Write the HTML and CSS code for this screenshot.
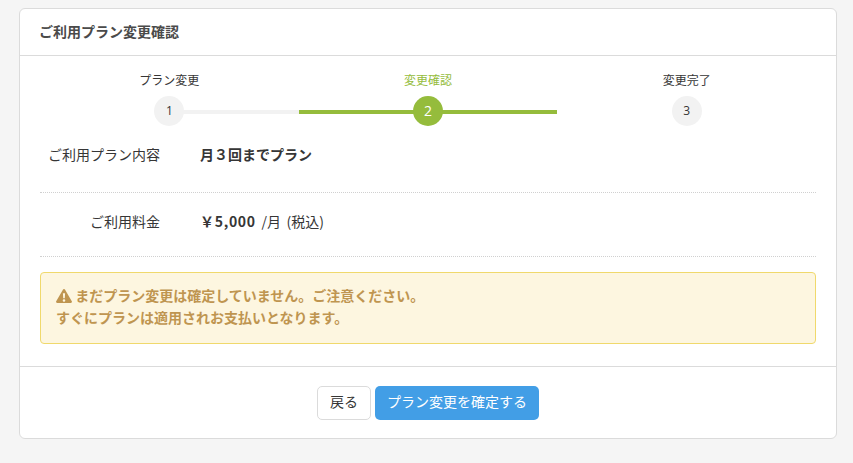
FILE: index.html
```html
<!DOCTYPE html>
<html lang="ja">
  <head>
    <meta charset="utf-8">
    <title>ご利用プラン変更確認</title>
    <link rel="stylesheet" href="styles.css">
  </head>
  <body>
    <div class="card">
      <div class="card_header">ご利用プラン変更確認</div>

      <div class="card_content">
        <div class="steps">
          <div class="step">
            <div class="step_label">プラン変更</div>
            <div class="step_circle">1</div>
          </div>
          <div class="step step_active">
            <div class="step_label">変更確認</div>
            <div class="step_circle">2</div>
          </div>
          <div class="step step_last">
            <div class="step_label">変更完了</div>
            <div class="step_circle">3</div>
          </div>
        </div>

        <div class="plan_row plan_row_first">
          <div class="plan_label">ご利用プラン内容</div>
          <div class="plan_value"><strong>月３回までプラン</strong></div>
        </div>
        <div class="plan_row plan_row_second">
          <div class="plan_label">ご利用料金</div>
          <div class="plan_value plan_price"><strong>￥5,000</strong> /月 (税込)</div>
        </div>

        <div class="notice">
          <svg class="notice_icon" viewBox="0 0 16 14" width="16" height="14">
            <path fill="#bf9550" fill-rule="evenodd" d="M8 0c.5 0 .9.3 1.1.7l6.7 11.500c.5.8-.1 1.800-1.100 1.800H1.300C.3 14-.3 13 .2 12.200L6.900.7C7.100.3 7.500 0 8 0zM6.900 4.300l.3 5h1.600l.3-5zM8 10.200a1.300 1.300 0 1 0 0 2.600 1.300 1.300 0 0 0 0-2.600z"/>
          </svg>
          まだプラン変更は確定していません。ご注意ください。<br>
          すぐにプランは適用されお支払いとなります。
        </div>
      </div>

      <div class="card_footer">
        <button class="button">戻る</button>
        <button class="button button_primary">プラン変更を確定する</button>
      </div>
    </div>
  </body>
</html>
```

FILE: styles.css
```css
body{
  margin: 0;
  padding: 8px 16px 24px 19px;
  background: #f5f5f5;
  color: #363636;
  font-family: "Noto Sans CJK JP", "Noto Sans", sans-serif;
  font-size: 14px;
}
.card{
  background: #fff;
  border: 1px solid #dbdbdb;
  border-radius: 6px;
}
.card_header{
  height: 46px;
  line-height: 44px;
  padding: 0 19px;
  border-bottom: 1px solid #dbdbdb;
  font-size: 14px;
  font-weight: 700;
  color: #4a4a4a;
}
.card_content{
  padding: 15px 20px 22px;
}
.steps{
  display: grid;
  grid-template-columns: repeat(3, 1fr);
}
.step{
  position: relative;
  text-align: center;
}
.step::after{
  content: '';
  position: absolute;
  top: 39px;
  left: 50%;
  width: 100%;
  height: 4px;
  background: #f2f2f2;
}
.step_active::after,
.step_active::before{
  content: '';
  position: absolute;
  top: 39px;
  left: 0;
  width: 100%;
  height: 4px;
  background: #95bc3c;
}
.step_last::after{
  display: none;
}
.step_label{
  height: 18px;
  line-height: 18px;
  font-size: 12px;
  color: #363636;
}
.step_active .step_label{
  color: #95bc3c;
}
.step_circle{
  position: relative;
  z-index: 1;
  width: 30px;
  height: 30px;
  margin: 7px auto 0;
  border-radius: 50%;
  background: #f2f2f2;
  line-height: 30px;
  font-size: 12px;
  font-family: "Open Sans", sans-serif;
}
.step_active .step_circle{
  background: #95bc3c;
  color: #fff;
  font-size: 14px;
}
.plan_row{
  display: flex;
  border-bottom: 1px dotted #d0d0d0;
}
.plan_row_first{
  height: 66px;
}
.plan_row_second{
  height: 63px;
  margin-bottom: 15px;
}
.plan_label{
  width: 120px;
  margin-right: 40px;
  text-align: right;
  line-height: 20px;
  font-size: 14px;
}
.plan_row .plan_label,
.plan_row .plan_value{
  margin-top: 18px;
}
.plan_value{
  line-height: 20px;
  font-size: 14px;
  color: #363636;
}
.plan_price{
  word-spacing: 2.500px;
}
.plan_price strong{
  letter-spacing: 0.700px;
}
.notice{
  height: 72px;
  box-sizing: border-box;
  padding: 11px 15px;
  background: #fdf6e0;
  border: 1px solid #f0d96c;
  border-radius: 4px;
  line-height: 22px;
  font-size: 14px;
  font-weight: 700;
  color: #bf9550;
}
.notice_icon{
  vertical-align: -2px;
}
.card_footer{
  display: flex;
  justify-content: center;
  gap: 4px;
  height: 72px;
  padding-top: 19px;
  box-sizing: border-box;
  border-top: 1px solid #dbdbdb;
}
.button{
  height: 34px;
  padding: 0 12px 4px;
  background: #fff;
  border: 1px solid #dbdbdb;
  border-radius: 5px;
  color: #363636;
  font-family: inherit;
  font-size: 14px;
  cursor: pointer;
}
.button_primary{
  padding: 0 11px 4px;
  background: #429ee6;
  border-color: transparent;
  color: #fff;
}
```
